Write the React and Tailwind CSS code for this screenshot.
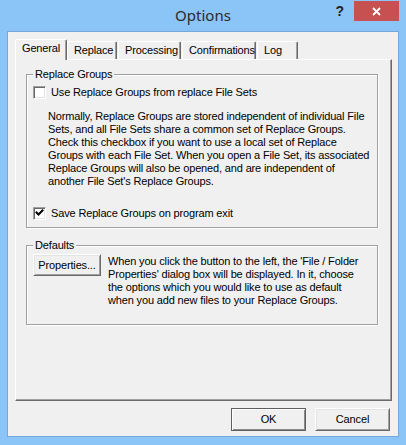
import React from "react";

function CheckBox({ checked }) {
  return (
    <div className="w-[13px] h-[13px] shrink-0 bg-white border-t border-l border-[#a0a0a0] border-r border-b border-r-white border-b-white shadow-[inset_1px_1px_0_#696969,inset_-1px_-1px_0_#e3e3e3]">
      {checked && (
        <svg width="11" height="11" viewBox="0 0 11 11" className="block">
          <path d="M2.5 4.5 L4.5 6.5 L8.5 2.5" stroke="#000" strokeWidth="2" fill="none" strokeLinecap="square" />
        </svg>
      )}
    </div>
  );
}

function Button({ children, isDefault, className = "" }) {
  return (
    <div
      className={`flex items-center justify-center text-[11px] text-black ${
        isDefault
          ? "border border-[#5f5f5f] shadow-[inset_1px_1px_0_#fff,inset_-1px_-1px_0_#8a8a8a]"
          : "border-t border-l border-white border-r border-b border-r-[#696969] border-b-[#696969] shadow-[inset_1px_1px_0_#e3e3e3,inset_-1px_-1px_0_#a0a0a0]"
      } ${className}`}
    >
      {children}
    </div>
  );
}

function Tab({ label, selected, className = "" }) {
  return (
    <div
      className={`relative rounded-t-[2px] border-t border-l border-white border-r border-r-[#696969] shadow-[inset_-1px_0_0_#a0a0a0] pl-[6px] pt-[2px] leading-[13px] text-[11px] ${
        selected ? "h-[21px] -mb-px z-10 bg-[#f0f0f0]" : "h-[18px]"
      } ${className}`}
    >
      {label}
    </div>
  );
}

export default function App() {
  return (
    <div className="w-[406px] h-[445px] bg-[#8bc4f6] font-['Liberation_Sans',Arial,sans-serif] text-[11px] tracking-[-0.15px] text-black overflow-hidden">
      {/* Title bar */}
      <div className="h-[31px] grid grid-cols-[1fr_auto_1fr]">
        <div />
        <div className="pt-[4px] text-[15px] tracking-normal text-[#2b2b2b] font-['Noto_Sans',sans-serif] leading-[22px]">
          Options
        </div>
        <div className="flex justify-end items-start">
          <div className="mt-[3px] mr-[10px] text-[14px] font-bold leading-[16px] text-[#1f1f1f]">?</div>
          <div className="mt-px mr-[7px] w-[45px] h-[20px] bg-[#c75050] flex items-center justify-center">
            <svg width="9" height="9" viewBox="0 0 9 9">
              <path d="M1 1 L8 8 M8 1 L1 8" stroke="#fff" strokeWidth="1.8" />
            </svg>
          </div>
        </div>
      </div>

      {/* Client area */}
      <div className="ml-[7px] w-[392px] h-[406px] border border-[#74a8dc] bg-[#f0f0f0]">
        {/* Tabs */}
        <div className="mt-[7px] ml-[7px] h-[20px] flex items-end">
          <Tab label="General" selected className="w-[52px]" />
          <Tab label="Replace" className="w-[50px]" />
          <Tab label="Processing" className="w-[63px] ml-px" />
          <Tab label="Confirmations" className="w-[74px] ml-px" />
          <Tab label="Log" className="w-[41px] ml-px" />
        </div>

        {/* Tab panel */}
        <div className="ml-[7px] w-[377px] h-[342px] border-t border-l border-white border-r border-b border-r-[#696969] border-b-[#696969] shadow-[inset_-1px_-1px_0_#a0a0a0] pt-[8px] pl-[10px]">
          <fieldset className="w-[352px] border border-[#a0a0a0] shadow-[inset_1px_1px_0_#fff,1px_1px_0_#fff]">
            <legend className="ml-[6px] px-[2px] leading-[13px] bg-[#f0f0f0]">Replace Groups</legend>
            <div className="pl-[6px] pb-[7px]">
              <div className="mt-[5px] flex items-center h-[13px]">
                <CheckBox />
                <span className="ml-[5px] leading-[13px]">Use Replace Groups from replace File Sets</span>
              </div>
              <p className="mt-[11px] ml-[15px] leading-[13px] whitespace-nowrap">
                Normally, Replace Groups are stored independent of individual File
                <br />
                Sets, and all File Sets share a common set of Replace Groups.
                <br />
                Check this checkbox if you want to use a local set of Replace
                <br />
                Groups with each File Set. When you open a File Set, its associated
                <br />
                Replace Groups will also be opened, and are independent of
                <br />
                another File Set's Replace Groups.
              </p>
              <div className="mt-[19px] flex items-center h-[13px]">
                <CheckBox checked />
                <span className="ml-[5px] leading-[13px]">Save Replace Groups on program exit</span>
              </div>
            </div>
          </fieldset>

          <fieldset className="mt-[11px] w-[352px] border border-[#a0a0a0] shadow-[inset_1px_1px_0_#fff,1px_1px_0_#fff]">
            <legend className="ml-[6px] px-[2px] leading-[13px] bg-[#f0f0f0]">Defaults</legend>
            <div className="pl-[6px] pb-[17px] flex items-start">
              <Button className="mt-[2px] w-[68px] h-[22px]">Properties...</Button>
              <p className="mt-[3px] ml-[7px] leading-[13px] whitespace-nowrap">
                When you click the button to the left, the 'File / Folder
                <br />
                Properties' dialog box will be displayed. In it, choose
                <br />
                the options which you would like to use as default
                <br />
                when you add new files to your Replace Groups.
              </p>
            </div>
          </fieldset>
        </div>

        {/* Dialog buttons */}
        <div className="mt-[7px] mr-[8px] flex justify-end gap-[9px]">
          <Button isDefault className="w-[75px] h-[23px]">OK</Button>
          <Button className="w-[75px] h-[23px]">Cancel</Button>
        </div>
      </div>
    </div>
  );
}
